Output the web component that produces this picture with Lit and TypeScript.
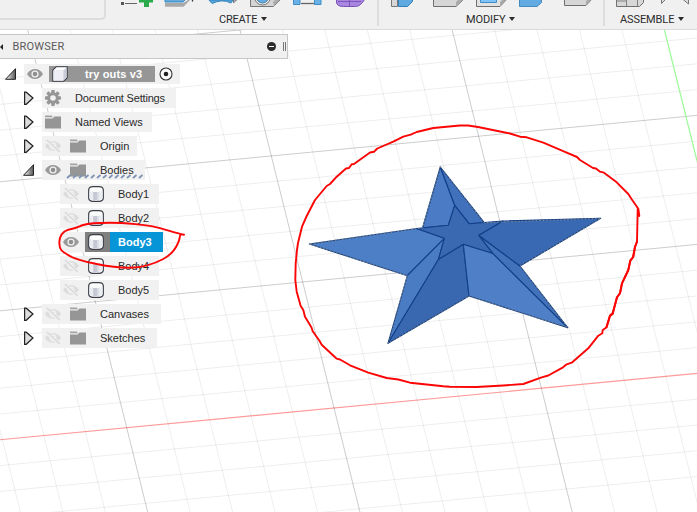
import { LitElement, html, svg, css, nothing } from "lit";
import { customElement, property } from "lit/decorators.js";
import { classMap } from "lit/directives/class-map.js";
import { styleMap } from "lit/directives/style-map.js";

type Pt = [number, number];

interface Row {
  label: string;
  level: 0 | 1 | 2;
  arrow?: "open" | "closed";
  eye?: "on" | "off";
  icon: "cube" | "gear" | "folder" | "body";
  width: number;
  state?: "root" | "selected" | "hatched" | "tight";
}

const ROWS: Row[] = [
  { label: "try outs v3", level: 0, arrow: "open", eye: "on", icon: "cube", width: 156, state: "root" },
  { label: "Document Settings", level: 1, arrow: "closed", icon: "gear", width: 134, state: "tight" },
  { label: "Named Views", level: 1, arrow: "closed", icon: "folder", width: 110 },
  { label: "Origin", level: 1, arrow: "closed", eye: "off", icon: "folder", width: 95 },
  { label: "Bodies", level: 1, arrow: "open", eye: "on", icon: "folder", width: 103, state: "hatched" },
  { label: "Body1", level: 2, eye: "off", icon: "body", width: 99 },
  { label: "Body2", level: 2, eye: "off", icon: "body", width: 99 },
  { label: "Body3", level: 2, eye: "on", icon: "body", width: 103, state: "selected" },
  { label: "Body4", level: 2, eye: "off", icon: "body", width: 99 },
  { label: "Body5", level: 2, eye: "off", icon: "body", width: 99 },
  { label: "Canvases", level: 1, arrow: "closed", eye: "off", icon: "folder", width: 119 },
  { label: "Sketches", level: 1, arrow: "closed", eye: "off", icon: "folder", width: 115 },
];

const eyeIcon = (on: boolean) => html`<svg class="eye" width="16" height="16" viewBox="0 0 16 16">
  ${on
    ? svg`<path d="M0 8C2 4.600 4.800 3 8 3s6 1.600 8 5c-2 3.400-4.800 5-8 5S2 11.400 0 8z" fill="#999"/>
        <circle cx="8" cy="8" r="3.600" fill="#f1f1f1"/><circle cx="8" cy="8" r="2.300" fill="#8f8f8f"/>`
    : svg`<path d="M0 8C2 4.800 4.800 3.300 8 3.300s6 1.500 8 4.700c-2 3.200-4.800 4.700-8 4.700S2 11.200 0 8z" fill="#dcdcdc"/>
        <circle cx="8" cy="8" r="3.400" fill="#f1f1f1"/><circle cx="8" cy="8" r="2.100" fill="#dcdcdc"/>
        <path d="M1.500 2.600L15 14.200" stroke="#f1f1f1" stroke-width="3.400"/><path d="M1.800 2L14.800 14" stroke="#d8d8d8" stroke-width="1.400"/>`}
</svg>`;

const gearTeeth = [0, 45, 90, 135, 180, 225, 270, 315];

const ICONS = {
  cube: html`<svg width="16" height="16" viewBox="0 0 16 16">
    <path d="M.8 4.200L4.200.8h11v11l-3.600 3.400H.8z" fill="#dfe1ea" stroke="#3a3c42" stroke-width="1.100" stroke-linejoin="round"/>
    <path d="M1.400 4.800h10v9.800h-10z" fill="#eeeff6"/><path d="M1.800 4.200L4.600 1.400h9.800l-3 2.800z" fill="#fff"/>
    <path d="M11.600 4.600l3-3v9.800l-3 3z" fill="#c9ccda"/></svg>`,
  gear: html`<svg width="16" height="16" viewBox="0 0 16 16">
    ${gearTeeth.map((a) => svg`<path d="M6.500 0h3l.5 3.500H6z" fill="#969696" transform="rotate(${a} 8 8)"/>`)}
    <circle cx="8" cy="8" r="4.200" fill="none" stroke="#969696" stroke-width="2.800"/></svg>`,
  folder: html`<svg width="16" height="16" viewBox="0 0 16 16">
    <path d="M0 1.500h6.600l1.600 1.700H0z" fill="#a2a2a2"/><path d="M0 4.500h7.600l1.800-2H16V14.500H0z" fill="#969696"/></svg>`,
  body: html`<svg width="16" height="16" viewBox="0 0 16 16">
    <path d="M.7 3.600Q1.200.7 5 .7h6q3.800 0 4.300 2.900v8.800q-.5 2.900-4.300 2.900H5q-3.800 0-4.300-2.900z" fill="#fff" stroke="#3b3e47" stroke-width="1.200"/>
    <path d="M1.500 4.800c3 1.500 10 1.500 13 0V12c-2 3-11 3-13 0z" fill="#ecedf2"/>
    <path d="M5.200 6h3.800v8H5.200z" fill="#c6c9d4"/><path d="M9 6h2v8H9z" fill="#dcdee5"/></svg>`,
};

@customElement("tool-bar")
class ToolBar extends LitElement {
  static styles = css`
    :host { display: flex; height: 30px; box-sizing: border-box; background: #f0f0f0; border-bottom: 1px solid #dadada; overflow: hidden; }
    .field { width: 106px; height: 20px; box-sizing: border-box; border: solid #dcdcdc; border-width: 0 2px 2px 0; border-radius: 0 0 5px 0; }
    .group { display: flex; flex-direction: column; height: 26px; box-sizing: border-box; }
    .create { width: 273px; border-right: 2px solid #dedede; }
    .modify { width: 226px; border-right: 2px solid #dedede; }
    .assemble { width: 92px; }
    svg { display: block; flex: none; }
    .name { display: flex; align-items: center; gap: 4px; height: 14px; margin-top: 5px; font: 11px/14px Roboto, sans-serif; color: #2c2c2c; }
    .name i { border: solid transparent; border-width: 4px 3px 0; border-top-color: #2c2c2c; margin-bottom: 2px; }
    .create .name { padding-left: 113px; letter-spacing: -.2px; }
    .modify .name { padding-left: 87px; letter-spacing: -.1px; }
    .assemble .name { padding-left: 15px; letter-spacing: -.1px; }
  `;
  render() {
    return html`
      <div class="field"></div>
      <div class="group create">
        <svg width="271" height="8" viewBox="106 0 271 8">
          <path d="M121 2h3v3h-3z" fill="#555"/><path d="M125 3.500h12" stroke="#666"/>
          <path d="M139 -3h14v5.500h-4V7h-5V2.500h-5z" fill="#29ab4b"/>
          <path d="M165 3h18l5-3h2l-6.500 6.700H165z" fill="#a9a9a9"/><path d="M165 -2h18l4 0-4 4H165z" fill="#65abdf" stroke="#3384bd"/>
          <path d="M192.500 0v1.500" stroke="#333" stroke-width="1.300"/>
          <path d="M209 0l3 3.500q10-5 19-.5l2-3z" fill="#5aa7df" stroke="#3284bd"/><path d="M233.500 0v3l3-3z" fill="#ddd" stroke="#777"/>
          <path d="M250.500 -2v8.500h23l7-7z" fill="#d5d5d5" stroke="#777"/><path d="M274 6l7-8h-4l-4 4z" fill="#aaa"/>
          <circle cx="262.500" cy="-3" r="8" fill="#eee" stroke="#777"/><circle cx="262.500" cy="-3" r="6" fill="#66ade3" stroke="#4a7c9e"/>
          <path d="M293.500 -2h6.500v6.500h-6.500zM314.500 -2h6.500v6.500h-6.500z" fill="#6ab1e7" stroke="#3c8dc6"/><path d="M301 3.500h13" stroke="#666" stroke-width="1.300"/>
          <path d="M336.500 -3v5q0 4.500 7 4.500h12q5 0 9-7z" fill="#a987e0" stroke="#7950b7"/><path d="M349.500 0v6M338 1.500h23" stroke="#7e56bb"/>
        </svg>
        <div class="name">CREATE<i></i></div>
      </div>
      <div class="group modify">
        <svg width="224" height="8" viewBox="379 0 224 8">
          <path d="M391.500 -1h6v7.500h-6z" fill="#d7d7d7" stroke="#777"/><path d="M398.500 -1v7.500h9l5-5V-1z" fill="#5faae0" stroke="#347fb5"/>
          <path d="M433.500 -1v7.500h22.500l8-7.500z" fill="#d6d6d6" stroke="#6f6f6f"/><path d="M456 6l8-7h-5l-3 3z" fill="#aaa"/>
          <path d="M476.500 -1v7.500H500l7-7.500z" fill="#e1e1e1" stroke="#6f6f6f"/><path d="M480.500 -1h16v3.500h-16z" fill="#80c3fb" stroke="#408ec8"/><path d="M500 6l7-7h-4l-3 3z" fill="#aaa"/>
          <path d="M519.500 -1v7.500h17.500l4.500-4V-1z" fill="#61abe2" stroke="#4389bd"/>
          <path d="M564.500 -1v6.500H586l6-6.500z" fill="#d6d6d6" stroke="#6f6f6f"/><path d="M586 5l6-6h-4l-2 2z" fill="#aaa"/>
        </svg>
        <div class="name">MODIFY<i></i></div>
      </div>
      <div class="group assemble">
        <svg width="92" height="8" viewBox="605 0 92 8">
          <path d="M616.500 -1v7.500h23l4-4V-1z" fill="#d7d7d7" stroke="#6f6f6f"/><path d="M626.500 0v6M616 1h10M637.500 0v6" stroke="#777" stroke-width=".9"/>
          <path d="M661.500 0v3.500l5-5M688.500 -1v5l-6-5" fill="#ddd" stroke="#777"/>
        </svg>
        <div class="name">ASSEMBLE<i></i></div>
      </div>`;
  }
}

@customElement("tree-row")
class TreeRow extends LitElement {
  @property({ attribute: false }) row!: Row;
  static styles = css`
    :host { display: block; height: 20px; }
    .line { display: flex; height: 20px; }
    .arrow { flex: none; display: block; height: 20px; }
    .l0 .arrow { width: 24px; }
    .l1 .arrow { width: 42px; }
    .l2 .arrow { width: 60px; }
    .box { position: relative; display: flex; align-items: center; background: #f1f1f1; box-sizing: border-box; padding-left: 3px; }
    svg { display: block; flex: none; }
    .eye { margin-right: 9px; }
    .label { font: 11px/20px "Liberation Sans", Arial, sans-serif; color: #2a2a2a; margin-left: 14px; white-space: nowrap; }
    .tight .label { letter-spacing: -.18px; }
    .chip { display: flex; align-items: center; height: 20px; }
    .root .eye { margin-right: 6px; }
    .root .chip { width: 106px; height: 16px; background: #969696; box-sizing: border-box; padding-left: 3px; }
    .root .label, .selected .label { font-weight: bold; color: #fff; }
    .root .label { margin-left: 17px; letter-spacing: .15px; line-height: 16px; }
    .target { margin-left: 4px; }
    .selected .eye { margin-right: 6px; }
    .selected .chip { background: linear-gradient(90deg, #808080 25px, #0696d7 25px); padding-left: 3px; flex: 1; }
    .hatch { position: absolute; left: 24px; top: 14px; }
  `;
  render() {
    const r = this.row;
    const x = r.level === 0 ? 5 : 23;
    return html`<div class=${classMap({ line: true, ["l" + r.level]: true, [r.state ?? "plain"]: true })}>
      <svg class="arrow" viewBox=${r.level === 0 ? "0 0 24 20" : r.level === 1 ? "0 0 42 20" : "0 0 60 20"}>
        <defs><linearGradient id="g"><stop offset=".2" stop-color="#ddd"/><stop offset="1" stop-color="#555"/></linearGradient></defs>
        ${r.arrow === "open" ? svg`<path d="M${x + 0.5} 15.300L${x + 10.5} 4.700V15.300z" fill="url(#g)" stroke="#222" stroke-width="1"/>` : nothing}
        ${r.arrow === "closed" ? svg`<path d="M24.600 4.200h1.600L33 10l-6.800 6.300h-1.600z" fill="#dcdcdc" stroke="#222" stroke-width="1.200"/>` : nothing}
      </svg>
      <div class="box" style=${styleMap({ width: r.width + "px" })}>
        ${r.eye ? eyeIcon(r.eye === "on") : nothing}
        <div class="chip">${ICONS[r.icon]}<span class="label">${r.label}</span></div>
        ${r.state === "root" ? html`<svg class="target" width="14" height="14" viewBox="0 0 14 14">
          <circle cx="7" cy="7" r="6" fill="#fff" stroke="#333" stroke-width="1.100"/><circle cx="7" cy="7" r="2.300" fill="#222"/></svg>` : nothing}
        ${r.state === "hatched" ? html`<svg class="hatch" width="78" height="5" viewBox="0 0 78 5">
          ${Array.from({ length: 13 }, (_, i) => svg`<path d="M${1 + i * 6} 4l3.500-3" stroke="#7d92b4" stroke-width="1.700"/>`)}</svg>` : nothing}
      </div>
    </div>`;
  }
}

@customElement("browser-panel")
class BrowserPanel extends LitElement {
  static styles = css`
    :host { display: block; }
    .head { display: flex; align-items: center; width: 288px; height: 25px; box-sizing: border-box; background: #f0f0f0; border: solid #c6c6c6; border-width: 1px 1px 1px 0; }
    .back { border: solid transparent; border-width: 3.500px 3.500px 3.500px 0; border-right-color: #222; margin-right: 9.500px; }
    .title { flex: 1; font: 11px/22px Roboto, sans-serif; letter-spacing: .2px; color: #5a5a5a; }
    .grip { width: 1px; height: 9px; border: solid #777; border-width: 0 1px; margin: 0 1px 0 7px; }
    .tree { display: flex; flex-direction: column; gap: 4px; padding-top: 5px; }
  `;
  render() {
    return html`<div class="head"><i class="back"></i><span class="title">BROWSER</span>
      <svg width="9" height="9" viewBox="0 0 9 9"><circle cx="4.500" cy="4.500" r="4.500" fill="#2b2b2b"/><path d="M2 4.500h5" stroke="#fff" stroke-width="1"/></svg>
      <i class="grip"></i></div>
      <div class="tree">${ROWS.map((r) => html`<tree-row .row=${r}></tree-row>`)}</div>`;
  }
}

const FACES: [string, Pt[]][] = [
  ["#4a7bc4", [[440.3, 167], [422.5, 228], [448.3, 225.3], [454.7, 205.3]]],
  ["#4171bb", [[440.3, 167], [454.7, 205.3], [469, 223.7], [484.3, 222.7]]],
  ["#4d7fc7", [[309.3, 244], [416.7, 228.5], [444.3, 238.3], [407.3, 275.7]]],
  ["#4a7cc3", [[444.3, 238.3], [407.3, 275.7], [388, 343.3], [438.5, 259.3]]],
  ["#3968b0", [[438.5, 259.3], [388, 343.3], [469, 296], [463.3, 244.3]]],
  ["#4e7fc7", [[463.3, 244.3], [469, 296], [567.7, 327.7], [492.7, 253.3]]],
  ["#4272ba", [[478.7, 235.3], [492.7, 253.3], [567.7, 327.7], [520, 266]]],
  ["#3969b3", [[478.7, 235.3], [520, 266], [600.7, 218.3], [502.7, 221]]],
];

const CORE = "454.7,205.3 469,223.7 502.7,221 478.7,235.3 492.7,253.3 463.3,244.3 438.5,259.3 444.3,238.3 416.7,228.5 448.3,225.3";
const OUTLINE = "440.3,166.7 422.5,227.8 309.3,244 407.3,275.7 388,343.3 469,296 567.7,327.7 520,266 600.7,218.3 484.3,222.7";

@customElement("model-view")
class ModelView extends LitElement {
  static styles = css`
    :host { display: block; }
    svg { display: block; }
    .minor { stroke: #000; stroke-opacity: .072; stroke-width: 1; }
    .major { stroke: #000; stroke-opacity: .2; stroke-width: 1; }
    .x { stroke: #ff9a9a; stroke-width: 1.100; }
    .y { stroke: #98fb98; stroke-width: 1.200; }
    .face { stroke: #123f86; stroke-width: 1.100; stroke-linejoin: round; }
    .rim { fill: none; stroke: #8c8c88; stroke-width: .9; stroke-dasharray: 1.500 2; }
  `;
  render() {
    const across = Array.from({ length: 23 }, (_, i) => i - 18);
    const down = Array.from({ length: 21 }, (_, i) => i - 3);
    return html`<svg width="697" height="482" viewBox="0 30 697 482">
      ${across.map((k) => svg`<line class=${k === 0 ? "x" : k % 5 === 0 ? "major" : "minor"} x1="0" y1=${439.8 + 25.8 * k} x2="697" y2=${373.4 + 25.8 * k} />`)}
      ${down.map((k) => svg`<line class=${k === 15 ? "y" : k % 5 === 0 ? "major" : "minor"} x1=${27.7 + 42.45 * k} y1="30" x2=${147.7 + 42.45 * k} y2="512" />`)}
      ${FACES.map(([fill, pts]) => svg`<polygon class="face" fill=${fill} points=${pts.map((p) => p.join(",")).join(" ")} />`)}
      <polygon class="face" fill="#3a69b2" points=${CORE} />
      <polygon class="rim" points=${OUTLINE} />
    </svg>`;
  }
}

const BIG: Pt[] = [[297, 250], [298, 243], [302, 226.7], [306.7, 216], [315, 200], [326.7, 186], [330, 184], [336.7, 176.7], [346, 168.5], [349, 168], [351.7, 164.3], [354, 164], [370, 152.5], [374, 151.7], [377.3, 148.5], [393.3, 141.7], [403.3, 136.7], [410.7, 134.7], [416.7, 132], [433.3, 128], [460, 125.5], [468, 125.5], [478, 127], [510, 133.5], [520, 136.7], [526.7, 137.3], [543.3, 142.7], [566.7, 152.7], [577, 157], [580, 160], [593, 168], [596, 168.5], [600, 171.7], [604, 172.7], [616.7, 182.3], [628.3, 194], [631.7, 199.3], [638.3, 208.7], [639.3, 216], [637.7, 209], [637, 241.7], [635, 247], [633.3, 257], [630.3, 260.7], [628.3, 270], [622, 283.3], [620, 293.3], [617, 297.3], [612.7, 314], [610, 316], [606.7, 327.3], [602.7, 330], [602.3, 333.3], [598.3, 335.7], [588.3, 348.3], [571.7, 362.7], [566.7, 364.3], [563, 367.3], [548.3, 375.5], [541.7, 377.3], [523.3, 384], [503.3, 385.5], [476.7, 387], [450, 386.7], [443.3, 386.3], [410, 382.7], [398.3, 379.5], [386.7, 378], [368.3, 372.7], [350, 365.3], [340, 359.5], [336.7, 358.7], [321.7, 344.7], [319.3, 340.5], [312.7, 331.3], [311.5, 327.5], [305, 316.7], [303.3, 310], [300.7, 306], [296.7, 291.7], [295.3, 280], [295.7, 263.3], [297, 250]];
// The same outline with the free-hand joints of its right half spread along the stroke.
const RIGHT: Pt[] = [[637, 241.7], [635, 247], [632.9, 257.3], [630.3, 260.7], [628.3, 270], [625, 277], [622, 283.3], [620, 293.3], [617, 297.3], [612.7, 313], [610, 315.5], [606.3, 327.3]];
const SMALL = "M184 234.700C175 233 166 229.500 156.700 227.300S125 222.700 110 222.700S88 223.500 83.300 225S78 228 68.300 229.700C62 232 59.500 237 59.300 242.300C59.500 247 60 250 64 252.500S70 256 71.700 257S84 261.500 93.300 263.300S115 268 130 267.700S154 264 163.300 259S176 248 178.300 242.300S179 238 180.500 234.500";

const toPath = (pts: Pt[]) => "M" + pts.map((p) => p.join(" ")).join("L");

@customElement("app-root")
class AppRoot extends LitElement {
  static styles = css`
    :host { display: block; width: 697px; height: 512px; overflow: hidden; background: #fff; }
    .page { display: grid; grid-template-columns: 697px; grid-template-rows: 30px 482px; position: relative; }
    .view, .panel { grid-area: 2 / 1; }
    .panel { margin-top: 4px; z-index: 1; justify-self: start; }
    .ink { position: absolute; inset: 0; z-index: 2; fill: none; stroke: #fb0505; stroke-width: 1.900; stroke-linejoin: round; stroke-linecap: round; }
  `;
  render() {
    return html`<div class="page">
      <tool-bar></tool-bar>
      <model-view class="view"></model-view>
      <browser-panel class="panel"></browser-panel>
      <svg class="ink" width="697" height="512" viewBox="0 0 697 512">
        <path d=${toPath(BIG)} /><path d=${toPath(RIGHT)} /><path d=${SMALL} />
      </svg>
    </div>`;
  }
}
